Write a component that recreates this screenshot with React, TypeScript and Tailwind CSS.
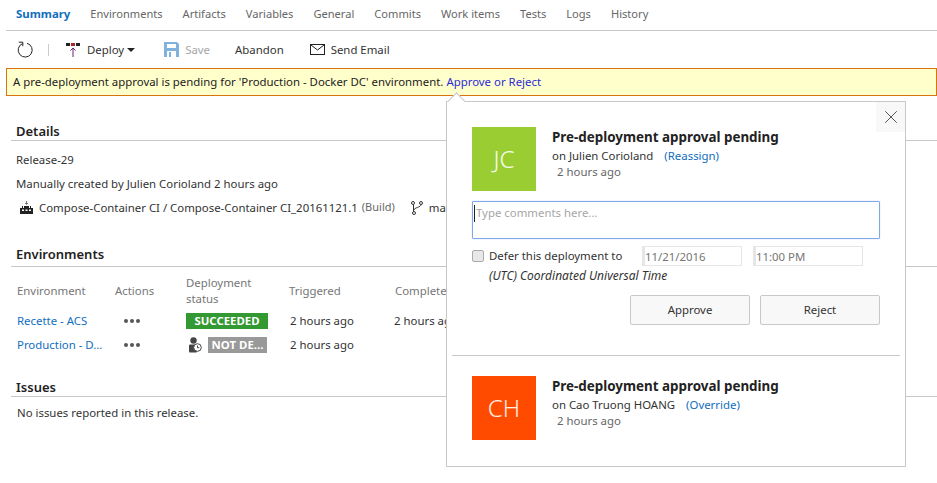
import { X } from "lucide-react";

const tabs = ["Environments", "Artifacts", "Variables", "General", "Commits", "Work items", "Tests", "Logs", "History"];

function RefreshIcon() {
  return (
    <svg width="16" height="17" viewBox="0 0 16 17" fill="none" stroke="#222" strokeWidth="1" className="shrink-0">
      <path d="M5.5 2.6A7 7 0 1 0 10 2.3" />
      <path d="M1.8 1.2H5.8V5.2" />
    </svg>
  );
}

function DeployIcon() {
  return (
    <svg width="14" height="14" viewBox="0 0 14 14" className="shrink-0">
      <rect x="0" y="0" width="4" height="3" fill="#222" />
      <rect x="5" y="0" width="4" height="3" fill="#a4262c" />
      <rect x="10" y="0" width="4" height="3" fill="#222" />
      <path d="M7 14V5M4.5 7.5L7 5l2.5 2.5" stroke="#68217a" strokeWidth="1" fill="none" />
    </svg>
  );
}

function SaveIcon() {
  return (
    <svg width="15" height="15" viewBox="0 0 15 15" className="shrink-0">
      <path d="M0 0h13l2 2v13H0z" fill="#7fb2dc" />
      <rect x="3" y="2" width="9" height="4" fill="#fff" />
      <rect x="3" y="9" width="9" height="6" fill="#fff" />
      <rect x="5" y="10" width="2" height="5" fill="#7fb2dc" />
    </svg>
  );
}

function MailIcon() {
  return (
    <svg width="15" height="11" viewBox="0 0 15 11" fill="none" stroke="#222" strokeWidth="1" className="shrink-0">
      <rect x="0.5" y="0.5" width="14" height="10" />
      <path d="M1 1l6.5 5L14 1" />
    </svg>
  );
}

function BuildIcon() {
  return (
    <svg width="13" height="13" viewBox="0 0 13 13" className="shrink-0">
      <path d="M6.5 0v3M5 2l1.5 1.5L8 2" stroke="#7a7a7a" fill="none" />
      <path d="M0 13V7h2V5h1v2h1V5h5v2h1V5h1v2h2v6z" fill="#222" />
      <rect x="2" y="8.5" width="2" height="1.5" fill="#fff" />
      <rect x="5.5" y="8.5" width="2" height="1.5" fill="#fff" />
      <rect x="9" y="8.5" width="2" height="1.5" fill="#fff" />
    </svg>
  );
}

function BranchIcon() {
  return (
    <svg width="12" height="14" viewBox="0 0 12 14" fill="none" stroke="#333" strokeWidth="1" className="shrink-0">
      <circle cx="2" cy="2" r="1.5" />
      <circle cx="10" cy="2" r="1.5" />
      <circle cx="3" cy="12" r="1.5" />
      <path d="M2.5 3.5v7M10 3.5c0 3-7 3-7 5.5" />
    </svg>
  );
}

function PendingIcon() {
  return (
    <svg width="14" height="16" viewBox="0 0 14 16" className="shrink-0">
      <circle cx="5.5" cy="3.5" r="3.2" fill="#444" />
      <rect x="1" y="7.5" width="8" height="8" rx="1" fill="#444" />
      <circle cx="9.5" cy="10.5" r="3.8" fill="#fff" stroke="#444" />
      <path d="M9.5 8.5v2.2h1.8" stroke="#444" fill="none" />
    </svg>
  );
}

function Dots() {
  return (
    <span className="w-[71px] shrink-0 pl-[9px] flex gap-[2px]">
      <span className="w-[4px] h-[4px] rounded-full bg-[#555]" />
      <span className="w-[4px] h-[4px] rounded-full bg-[#555]" />
      <span className="w-[4px] h-[4px] rounded-full bg-[#555]" />
    </span>
  );
}

function SectionTitle({ title, className }: { title: string; className: string }) {
  return (
    <div className={`ml-[11px] border-b border-[#c8c8c8] pl-[5px] text-[13px] leading-[18px] font-semibold text-[#222] ${className}`}>
      {title}
    </div>
  );
}

function Approver({ initials, color, name, action }: { initials: string; color: string; name: string; action: string }) {
  return (
    <div className="flex">
      <div className={`w-16 h-16 flex items-center justify-center text-2xl font-light text-white/90 shrink-0 ${color}`}>{initials}</div>
      <div className="ml-4">
        <div className="text-[13.4px] leading-[20px] font-bold text-[#222]">Pre-deployment approval pending</div>
        <div className="leading-[17px] text-[#333]">
          on {name}
          <span className="text-[#106ebe] ml-[11px]">({action})</span>
        </div>
        <div className="leading-[16px] ml-[5px] text-[#666]">2 hours ago</div>
      </div>
    </div>
  );
}

export default function App() {
  return (
    <div className="relative w-[937px] h-[483px] overflow-hidden bg-white text-[11.4px] text-[#333] font-['Noto_Sans','Open_Sans',sans-serif]">
      {/* Tabs */}
      <div className="ml-[6px] h-[31px] flex items-center gap-[20px] pl-[10px] border-b border-[#c8c8c8] pb-[2px] text-[11.1px]">
        <span className="font-bold text-[11.4px] text-[#106ebe]">Summary</span>
        {tabs.map((t) => (
          <span key={t} className="text-[#666]">{t}</span>
        ))}
      </div>

      {/* Toolbar */}
      <div className="h-[37px] flex items-center pl-[17px]">
        <RefreshIcon />
        <span className="ml-[15px] h-[12px] w-px bg-[#ccc]" />
        <span className="ml-[17px]"><DeployIcon /></span>
        <span className="ml-[7px]">Deploy</span>
        <span className="ml-[3px] w-0 h-0 border-x-[4px] border-x-transparent border-t-[4px] border-t-[#222]" />
        <span className="ml-[29px]"><SaveIcon /></span>
        <span className="ml-[6px] text-[#a6a6a6]">Save</span>
        <span className="ml-[25px]">Abandon</span>
        <span className="ml-[26px]"><MailIcon /></span>
        <span className="ml-[6px]">Send Email</span>
      </div>

      {/* Banner */}
      <div className="ml-[6px] h-[28px] flex items-center pl-[6px] bg-[#ffffcc] border border-[#d9730d] text-[#222]">
        A pre-deployment approval is pending for 'Production - Docker DC' environment.
        <span className="ml-[3px] text-[#2b2bd8]">Approve or Reject</span>
      </div>

      {/* Details */}
      <SectionTitle title="Details" className="mt-[26px] h-[19px]" />
      <div className="pl-[16px] mt-[10px] leading-[17px]">Release-29</div>
      <div className="pl-[16px] mt-[7px] leading-[17px]">Manually created by Julien Corioland 2 hours ago</div>
      <div className="w-[446px] overflow-hidden pl-[20px] mt-[7px] h-[17px] flex items-center whitespace-nowrap">
        <BuildIcon />
        <span className="ml-[6px]">Compose-Container CI / Compose-Container CI_20161121.1</span>
        <span className="ml-[4px] text-[#666] text-[11px]">(Build)</span>
        <span className="ml-[16px]"><BranchIcon /></span>
        <span className="ml-[6px]">master</span>
      </div>

      {/* Environments */}
      <SectionTitle title="Environments" className="mt-[29px] h-[22px]" />
      <div className="w-[446px] overflow-hidden mt-[8px] pl-[17px] h-[32px] flex items-center text-[#767676] leading-[16px] whitespace-nowrap">
        <span className="w-[98px] shrink-0">Environment</span>
        <span className="w-[71px] shrink-0">Actions</span>
        <span className="w-[103px] shrink-0">Deployment<br />status</span>
        <span className="w-[106px] shrink-0">Triggered</span>
        <span className="shrink-0">Completed</span>
      </div>
      <div className="w-[446px] overflow-hidden mt-[2px] pl-[17px] h-[24px] flex items-center whitespace-nowrap">
        <span className="w-[98px] shrink-0 text-[#106ebe]">Recette - ACS</span>
        <Dots />
        <span className="w-[103px] shrink-0">
          <span className="block w-[82px] h-[16px] leading-[16px] bg-[#339933] text-white font-bold text-center">SUCCEEDED</span>
        </span>
        <span className="w-[105px] shrink-0 pl-px">2 hours ago</span>
        <span className="shrink-0">2 hours ago</span>
      </div>
      <div className="pl-[17px] h-[24px] flex items-center whitespace-nowrap">
        <span className="w-[98px] shrink-0 text-[#106ebe]">Production - D...</span>
        <Dots />
        <span className="w-[103px] shrink-0 flex items-center">
          <span className="ml-[2px]"><PendingIcon /></span>
          <span className="ml-[6px] w-[59px] h-[16px] leading-[16px] bg-[#999] text-white font-bold text-center">NOT DE...</span>
        </span>
        <span className="w-[105px] shrink-0 pl-px">2 hours ago</span>
      </div>

      {/* Issues */}
      <SectionTitle title="Issues" className="mt-[21px] h-[19px]" />
      <div className="pl-[17px] mt-[7px] leading-[17px]">No issues reported in this release.</div>

      {/* Approval popover */}
      <div className="absolute left-[446px] top-[101px] w-[460px] h-[366px] bg-white border border-[#c8c8c8]">
        <div className="absolute -top-[7px] left-[3px] w-[13px] h-[13px] rotate-45 bg-white border-l border-t border-[#c8c8c8]" />
        <button className="absolute top-0 right-0 w-[29px] h-[30px] bg-[#f8f8f8] flex items-center justify-center">
          <X size={22} strokeWidth={1} className="text-[#444]" />
        </button>
        <div className="relative px-[25px] pt-[25px]">
          <Approver initials="JC" color="bg-[#9acd32]" name="Julien Corioland" action="Reassign" />
          <div className="mt-[10px] w-[408px] h-[38px] border border-[#7da7e8] rounded-[1px] shadow-[0_0_1px_#7da7e8] pl-[1px] pt-[3px] flex items-start">
            <span className="w-px h-[17px] bg-[#222]" />
            <span className="ml-px text-[#a6a6a6] leading-[15px]">Type comments here...</span>
          </div>
          <div className="mt-[9px] flex items-start">
            <span className="mt-[2px] w-[12px] h-[12px] rounded-[2px] border border-[#aaa] bg-[#e8e8e8] shrink-0" />
            <div className="ml-[5px] w-[153px]">
              <div className="leading-[16px] whitespace-nowrap">Defer this deployment to</div>
              <div className="leading-[16px] mt-[4px] text-xs italic whitespace-nowrap">(UTC) Coordinated Universal Time</div>
            </div>
            <div className="-mt-[2px] flex gap-[11px] text-[#767676]">
              <div className="w-[100px] h-[20px] border border-[#e6e6e6] border-l-[3px] leading-[19px]">11/21/2016</div>
              <div className="w-[110px] h-[20px] border border-[#e6e6e6] border-l-[3px] leading-[19px]">11:00 PM</div>
            </div>
          </div>
          <div className="mt-[11px] flex justify-end gap-[10px] w-[408px]">
            <button className="w-[120px] h-[30px] border border-[#c8c8c8] rounded-[2px] bg-[#f8f8f8]">Approve</button>
            <button className="w-[120px] h-[30px] border border-[#c8c8c8] rounded-[2px] bg-[#f8f8f8]">Reject</button>
          </div>
        </div>
        <div className="mt-[30px] mx-[5px] border-t border-[#c8c8c8]" />
        <div className="pl-[25px] pt-[20px]">
          <Approver initials="CH" color="bg-[#ff4b00]" name="Cao Truong HOANG" action="Override" />
        </div>
      </div>
    </div>
  );
}
